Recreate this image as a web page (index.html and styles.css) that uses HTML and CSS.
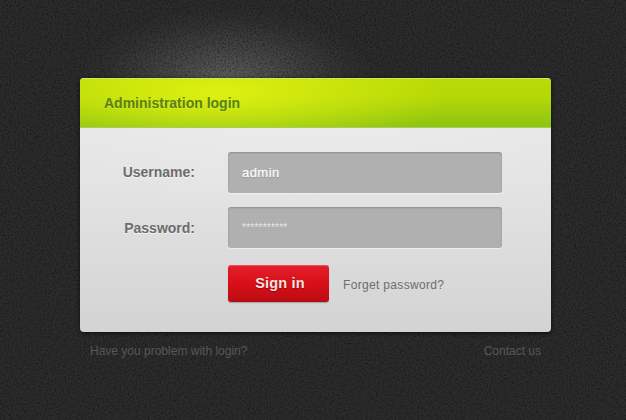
FILE: index.html
```html
<!DOCTYPE html>
<html lang="en">
<head>
<meta charset="utf-8">
<title>Administration login</title>
<link rel="stylesheet" href="styles.css">
</head>
<body>
<main class="page">
  <section class="card">
    <header class="card-head"><h1 class="title">Administration login</h1></header>
    <form class="card-body">
      <div class="row">
        <label class="label label-up">Username:</label>
        <div class="field">admin</div>
      </div>
      <div class="row">
        <label class="label">Password:</label>
        <div class="field field-secret">***********</div>
      </div>
      <div class="actions">
        <button class="signin" type="button">Sign in</button>
        <a class="forgot">Forget password?</a>
      </div>
    </form>
  </section>
  <footer class="foot">
    <a>Have you problem with login?</a>
    <a>Contact us</a>
  </footer>
</main>
</body>
</html>
```
FILE: styles.css
```css
* { box-sizing: border-box; }
html, body { margin: 0; height: 100%; }
body {
  width: 626px;
  height: 420px;
  overflow: hidden;
  font-family: "Liberation Sans", Arial, sans-serif;
  background-color: #2c2c2c;
  background-image:
    url("data:image/svg+xml,%3Csvg xmlns='http://www.w3.org/2000/svg' width='626' height='420'%3E%3Cfilter id='n'%3E%3CfeTurbulence type='fractalNoise' baseFrequency='.6' numOctaves='2' seed='4'/%3E%3CfeColorMatrix values='0 0 0 0 0 0 0 0 0 0 0 0 0 0 0 .9 0 0 0 -.36'/%3E%3C/filter%3E%3Crect width='626' height='420' filter='url(%23n)'/%3E%3C/svg%3E"),
    radial-gradient(ellipse 150px 72px at 228px 80px, rgba(165,165,165,.42), rgba(165,165,165,.2) 45%, rgba(165,165,165,.05) 80%, rgba(165,165,165,0) 100%);
}
.page { padding: 78px 75px 0 80px; }
.card {
  height: 254px;
  border-radius: 4px;
  overflow: hidden;
  background:
    radial-gradient(ellipse 260px 130px at 235px 20px, rgba(240,240,240,.5), rgba(240,240,240,0) 100%),
    linear-gradient(180deg, #ebebeb 0%, #e4e4e4 40%, #d3d3d3 100%);
  box-shadow: 0 1px 4px rgba(0,0,0,.7);
}
.card-head {
  height: 50px;
  padding-left: 24px;
  display: flex;
  align-items: center;
  border-top: 1px solid #d3e85a;
  border-bottom: 1px solid #a9cc5a;
  background:
    radial-gradient(ellipse 230px 60px at 140px 14px, rgba(232,246,20,.8), rgba(232,246,20,.4) 50%, rgba(232,246,20,0) 100%),
    linear-gradient(180deg, #b9da05 0%, #b3d707 40%, #8ec412 100%);
}
.title {
  margin: 0;
  font-size: 14px;
  font-weight: 700;
  color: #5a8016;
  text-shadow: 0 1px 0 rgba(230,245,120,.3);
}
.card-body {
  display: flex;
  flex-direction: column;
  gap: 14px;
  padding: 24px 49px 0 0;
}
.row {
  display: flex;
  align-items: center;
  height: 41px;
}
.label {
  width: 115px;
  margin-right: 33px;
  text-align: right;
  font-size: 14px;
  font-weight: 700;
  color: #6c6c6c;
  text-shadow: 0 1px 0 #f4f4f4;
}
.label-up { margin-bottom: 2px; }
.field {
  flex: 1;
  height: 41px;
  padding-left: 14px;
  display: flex;
  align-items: center;
  font-size: 13px;
  letter-spacing: .45px;
  color: #fafafa;
  border-radius: 3px;
  background: #b0b0b0;
  box-shadow: inset 0 1px 2px rgba(0,0,0,.2), 0 1px 0 rgba(255,255,255,.45);
  text-shadow: 0 0 1px rgba(255,255,255,.7), 0 1px 1px rgba(0,0,0,.2);
}
.field-secret { font-size: 10px; letter-spacing: .24px; color: #e8e8e8; text-shadow: none; }
.actions {
  display: flex;
  align-items: center;
  margin: 3px 0 0 148px;
}
.signin {
  width: 101px;
  height: 37px;
  padding: 0 0 2px 3px;
  margin-right: 14px;
  font: 700 14.5px "Liberation Sans", Arial, sans-serif;
  letter-spacing: .2px;
  color: #f5e3e3;
  border: 0;
  border-radius: 3px;
  background: linear-gradient(180deg, #e3202a 0%, #d90f18 50%, #b80c12 100%);
  box-shadow: inset 0 1px 0 rgba(255,120,120,.55), 0 1px 1px rgba(0,0,0,.25);
  text-shadow: 0 1px 1px rgba(90,0,0,.5);
}
.forgot { margin-top: 3px; font-size: 12px; color: #6d6d6d; letter-spacing: .33px; }
.foot {
  display: flex;
  justify-content: space-between;
  padding: 12px 10px 0;
  font-size: 12px;
  color: #575757;
}
```
